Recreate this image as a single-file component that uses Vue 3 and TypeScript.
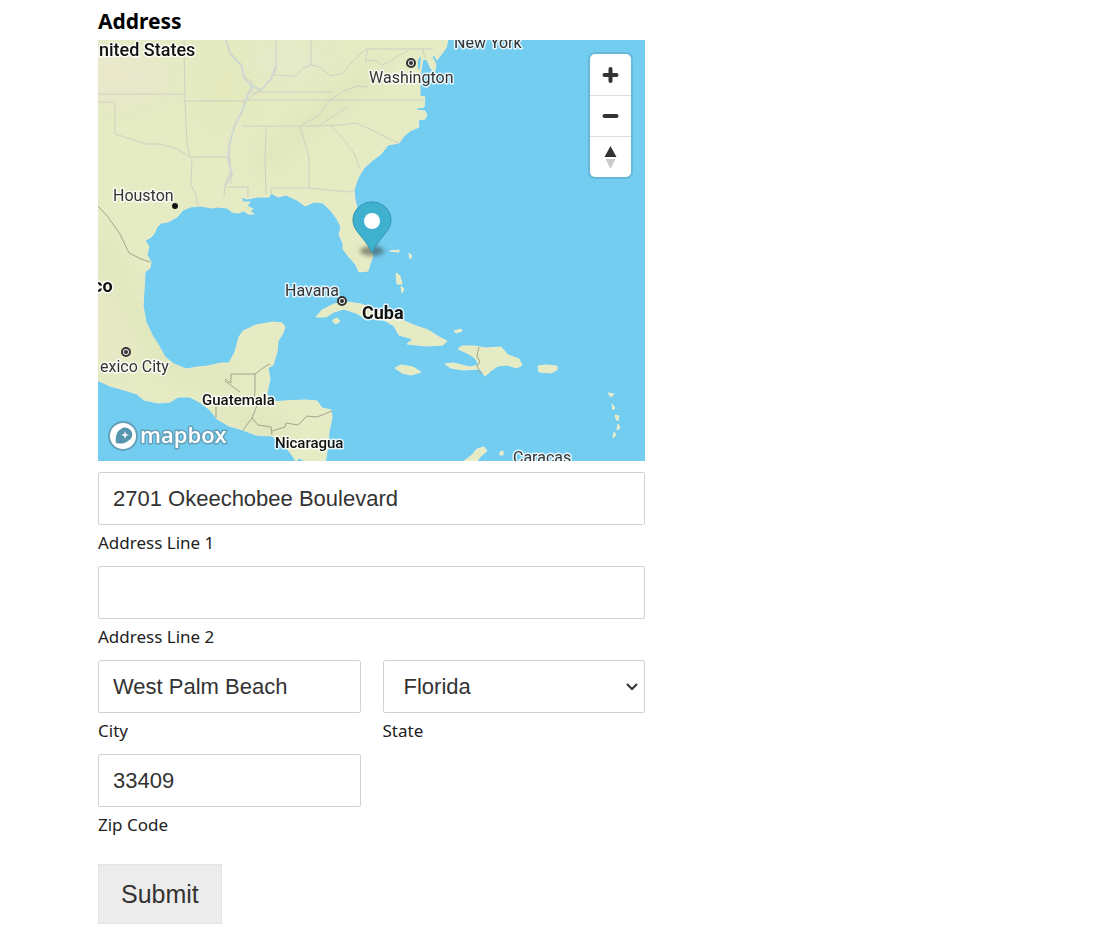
<script setup lang="ts">
import { ref } from 'vue'

const line1 = ref('2701 Okeechobee Boulevard')
const line2 = ref('')
const city = ref('West Palm Beach')
const state = ref('Florida')
const zip = ref('33409')
const states = ['Alabama', 'Florida', 'Georgia', 'Louisiana', 'Texas']

const mainland =
  'M90 30H455L448 40 446 48 440 56 437 60 434 55 432 57 436 64 435 71 431 69 427 60 423 59 421 70 420 85 420 96 425 97 424 107 417 108 416 110 425 111 427 115 425 119 418 120 419 127 410 131 404 136 399 143 388 145 381 154 373 160 364 168 358 178 354 190 355 200 358 212 365 229 371 246 373 256 370 264 368 271 359 272 356 265 349 257 343 249 343 243 339 235 341 227 337 219 331 211 323 203 314 202 305 206 297 200 286 195 278 197 271 193 269 197 258 197 247 199 241 197 243 202 250 202 247 206 253 209 250 211 254 214 248 214 244 211 238 213 232 212 227 208 218 207 211 208 201 206 190 207 183 210 177 217 168 222 161 223 157 227 154 234 150 238 145 240 149 247 147 255 151 262 150 268 145 272 144 290 143 306 146 322 152 335 159 346 165 357 174 364 186 369 198 367 208 366 221 363 229 363 235 352 239 337 243 331 256 325 273 322 282 323 285 327 283 333 278 341 277 352 273 365 268 368 270 379 267 393 270 402 284 401 305 400 317 401 322 408 331 410 332 418 329 431 328 445 324 470H308L305 461 299 458 296 461 289 451 281 443 272 436 256 435 243 430 229 426 217 419 210 410 201 403 190 397 178 397 170 402 158 403 144 400 137 394 121 389 110 386 90 377Z'

const islands: string[] = [
  'M316 317 322 310 334 304 347 302 361 304 371 308 385 313 402 320 416 326 428 330 439 337 447 341 443 345 427 346 407 344 413 339 399 335 394 326 384 320 365 318 356 313 344 309 334 312 326 317Z',
  'M333 320 337 318 340 321 336 324 333 322Z',
  'M395 368 401 365 413 367 421 372 411 375 402 373Z',
  'M445 364 453 363 470 367 479 365 475 358 467 353 458 349 462 346 474 346 486 348 501 347 508 355 519 359 522 365 517 368 507 365 498 366 492 370 485 376 480 369 463 370 451 368Z',
  'M538 366 545 365 557 366 557 370 551 373 539 372Z',
  'M396 273 400 276 402 284 397 284Z',
  'M401 286 404 289 402 293Z',
  'M390 251 399 250 399 252Z',
  'M409 253 412 256 410 259Z',
  'M454 331 461 329 462 331 456 333Z',
  'M464 461 472 455 477 449 484 447 487 451 481 456 477 461Z',
  'M500 452 503 451 503 455 500 455Z',
  'M608 393 614 394 611 397Z',
  'M612 404 615 408 613 410Z',
  'M615 415 619 416 618 421 616 419Z',
  'M618 424 620 428 617 430Z',
  'M614 432 616 435 613 438Z',
]

const stateLines: string[] = [
  'M98 94H184M184 40 185 101 187 144 190 157 230 157 231 184M184 101H245L258 92 269 92 290 92 333 92',
  'M98 102H115V134L131 139 145 144 160 144 175 148 190 157M192 157 191 184 196 196 198 207',
  'M226 40 230 53 242 66 243 76 252 82 252 91 244 101 242 114 234 126 230 144 229 157 231 172 225 184 224 196M276 40V68L271 80 261 90 252 94',
  'M276 68 274 75 296 76 303 68 312 65 321 68 331 76 343 73 352 62 366 49H433',
  'M311 40V65M243 101 249 100 330 100 344 91 357 86 368 87',
  'M242 126H318L348 107M318 126 340 125 356 123 372 130 391 140 399 143',
  'M330 100H424M330 100 318 116 300 126M331 126 345 141 355 155 360 169',
  'M266 126 265 160 266 195M300 126 309 157 309 188 348 192 354 190M309 188H271V194M224 187H248V198',
  'M423 50 425 58M368 49 365 61 375 60 382 65 391 61 400 55 408 51',
]

const countryLines: string[] = [
  'M98 206 108 217 120 234 129 253 141 259 150 262',
  'M225 379 231 383 231 374H255L255 391M255 374 266 366 270 364M225 381 240 392M255 391 254 405M216 405V418M258 403 252 418 243 430M252 418 258 425 271 427 272 435M272 431 285 427 286 423 298 425 307 416 317 417 332 411',
  'M479 347 477 356 480 362 477 366 481 374',
]

const rivers =
  'M226 40 230 53 242 66 244 78 252 86 247 97 243 109 235 125 229 145 228 160 232 175 224 187M252 86 261 90 271 79 276 66'

const relief: string[] = [
  'M98 240C118 275 125 308 150 340S180 375 230 380',
  'M260 165C300 125 340 100 380 65',
  'M220 403C240 420 263 426 282 430',
]

function zoomIn(): void {}
function zoomOut(): void {}
function resetBearing(): void {}
</script>

<template>
  <main class="page">
    <form class="address-form" @submit.prevent>
      <h2 class="title">Address</h2>

      <div class="map">
        <svg class="map-canvas" viewBox="98 40 547 421" role="img" aria-label="Map">
          <defs>
            <clipPath id="land-clip"><path :d="mainland" /></clipPath>
            <filter id="soft" x="-30%" y="-30%" width="160%" height="160%">
              <feGaussianBlur stdDeviation="9" />
            </filter>
            <filter id="pin-shade" x="-50%" y="-80%" width="200%" height="260%">
              <feGaussianBlur stdDeviation="2" />
            </filter>
          </defs>
          <rect x="98" y="40" width="547" height="421" fill="#73cdf0" />
          <path :d="mainland" class="land" />
          <g clip-path="url(#land-clip)" opacity=".6">
            <ellipse cx="112" cy="75" rx="55" ry="30" fill="#ebe6d0" filter="url(#soft)" />
            <ellipse cx="225" cy="85" rx="34" ry="40" fill="#e3e9bb" filter="url(#soft)" />
            <ellipse cx="290" cy="60" rx="40" ry="22" fill="#e6e9cc" filter="url(#soft)" />
            <ellipse cx="112" cy="330" rx="30" ry="45" fill="#e8e7c6" filter="url(#soft)" />
            <path v-for="d in relief" :key="d" :d="d" class="relief" filter="url(#soft)" />
          </g>
          <path v-for="d in islands" :key="d" :d="d" class="land" />
          <path d="M418 60 421 56 420 68 418 70Z" fill="#73cdf0" />
          <path v-for="d in stateLines" :key="d" :d="d" class="state-line" />
          <path :d="rivers" class="river" />
          <path v-for="d in countryLines" :key="d" :d="d" class="country-line" />

          <g class="capital">
            <circle cx="411" cy="63" r="4" /><circle cx="411" cy="63" r="1" />
            <circle cx="342" cy="301" r="4" /><circle cx="342" cy="301" r="1" />
            <circle cx="126" cy="352" r="4" /><circle cx="126" cy="352" r="1" />
          </g>
          <circle cx="175" cy="206" r="3" fill="#111" />

          <g class="place">
            <text x="454" y="48">New York</text>
            <text x="369" y="83">Washington</text>
            <text x="113" y="201">Houston</text>
            <text x="285" y="296">Havana</text>
            <text x="100" y="372">exico City</text>
            <text x="513" y="463">Caracas</text>
          </g>
          <g class="country">
            <text class="large" x="99" y="56">nited States</text>
            <text class="strong" x="93" y="292">co</text>
            <text class="strong" x="362" y="319">Cuba</text>
            <text x="202" y="405">Guatemala</text>
            <text x="275" y="448">Nicaragua</text>
          </g>

          <ellipse cx="372" cy="251" rx="12" ry="5" fill="#333" opacity=".5" filter="url(#pin-shade)" />
          <path
            d="M372 253C369 246 365 241 360 235 356 230 353 226 353 220A19 18 0 0 1 391 220C391 226 388 230 384 235 379 241 375 246 372 253Z"
            fill="#3fb1ce"
            stroke="#3293ad"
          />
          <circle cx="372" cy="221" r="8" fill="#fff" />

          <g>
            <circle cx="123" cy="436" r="14" fill="#fff" stroke="#64a1b9" stroke-width="2" />
            <path
              d="M116 443C115 436 117 431 121 429A7 7 0 1 1 128 441C124 444 120 444 116 443Z"
              fill="#5596ae"
            />
            <path d="M125 431 126 434 129 435 126 436 125 439 124 436 121 435 124 434Z" fill="#f4fbfe" />
            <text class="wordmark" x="140" y="443">mapbox</text>
          </g>
        </svg>

        <div class="map-controls">
          <button type="button" aria-label="Zoom in" @click="zoomIn">
            <svg viewBox="0 0 40 40"><path d="M14 20H26M20 14V26" class="bar" /></svg>
          </button>
          <button type="button" aria-label="Zoom out" @click="zoomOut">
            <svg viewBox="0 0 40 40"><path d="M14 20H26" class="bar" /></svg>
          </button>
          <button type="button" aria-label="Reset bearing to north" @click="resetBearing">
            <svg viewBox="0 0 40 40">
              <path d="M20 9 26 20H14Z" fill="#333" />
              <path d="M15 22H25L20 32Z" fill="#ccc" />
            </svg>
          </button>
        </div>
      </div>

      <div class="fields">
        <div class="field wide">
          <input id="line1" v-model="line1" type="text" />
          <label for="line1">Address Line 1</label>
        </div>
        <div class="field wide">
          <input id="line2" v-model="line2" type="text" />
          <label for="line2">Address Line 2</label>
        </div>
        <div class="field">
          <input id="city" v-model="city" type="text" />
          <label for="city">City</label>
        </div>
        <div class="field">
          <div class="select-box">
            <select id="state" v-model="state">
              <option v-for="s in states" :key="s" :value="s">{{ s }}</option>
            </select>
            <svg class="chevron" viewBox="0 0 14 10" aria-hidden="true">
              <path d="M2 2 7 7 12 2" />
            </svg>
          </div>
          <label for="state">State</label>
        </div>
        <div class="field">
          <input id="zip" v-model="zip" type="text" />
          <label for="zip">Zip Code</label>
        </div>
      </div>

      <button class="submit" type="submit">Submit</button>
    </form>
  </main>
</template>

<style>
body {
  margin: 0;
  background: #fff;
}
</style>

<style scoped>
.page {
  box-sizing: border-box;
  padding: 4px 24px 16px 98px;
  font-family: 'Noto Sans', 'Open Sans', sans-serif;
  color: #222;
}
.address-form {
  max-width: 547px;
}
.title {
  margin: 0;
  padding-bottom: 2px;
  font-size: 21px;
  line-height: 34px;
  font-weight: 700;
  color: #000;
}
.map {
  position: relative;
  overflow: hidden;
}
.map-canvas {
  display: block;
  width: 100%;
  height: auto;
}
.land {
  fill: #e5ebc3;
  stroke: #eeecc9;
  stroke-width: 1;
  stroke-linejoin: round;
}
.relief {
  fill: none;
  stroke: #d9e2b4;
  stroke-width: 14;
}
.state-line,
.country-line,
.river {
  fill: none;
  stroke-linejoin: round;
}
.state-line {
  stroke: #d0cfc3;
}
.river {
  stroke: #cfd9d2;
  stroke-width: 2;
}
.country-line {
  stroke: #a3a58d;
}
.capital circle {
  fill: #eee;
  stroke: #333;
  stroke-width: 2;
}
.map text {
  font-family: Roboto, sans-serif;
  paint-order: stroke;
  stroke: #fff;
  stroke-width: 3px;
  stroke-opacity: 0.8;
  stroke-linejoin: round;
}
.place text {
  font-size: 16px;
  fill: #333;
}
.country text {
  font-size: 15px;
  font-weight: 500;
  fill: #111;
}
.country .large {
  font-size: 18px;
}
.country .strong {
  font-size: 18px;
  font-weight: 700;
}
.map .wordmark {
  font-family: 'Open Sans', sans-serif;
  font-size: 22px;
  font-weight: 600;
  fill: #fff;
  stroke: #64a1b9;
  stroke-opacity: 1;
}
.map-controls {
  position: absolute;
  top: 14px;
  right: 14px;
  width: 41px;
  border-radius: 5px;
  background: #fff;
  box-shadow: 0 0 0 2px rgba(0, 0, 0, 0.1);
}
.map-controls button {
  display: block;
  box-sizing: border-box;
  width: 100%;
  height: 41px;
  padding: 0;
  border: 0;
  background: transparent;
  cursor: pointer;
}
.map-controls button + button {
  border-top: 1px solid #ddd;
}
.map-controls svg {
  display: block;
  width: 100%;
  height: 40px;
}
.bar {
  stroke: #333;
  stroke-width: 4;
  stroke-linecap: round;
}
.fields {
  display: grid;
  grid-template-columns: 1fr 1fr;
  column-gap: 22px;
  padding-top: 11px;
}
.wide {
  grid-column: 1 / -1;
}
.field {
  min-width: 0;
}
.field input,
.field select {
  display: block;
  box-sizing: border-box;
  width: 100%;
  height: 53px;
  margin: 0;
  padding: 0 14px;
  border: 1px solid #d2d2d2;
  border-radius: 2px;
  background: #fff;
  color: #333;
  font-family: 'Liberation Sans', Arial, sans-serif;
  font-size: 22px;
}
.field select {
  appearance: none;
  padding: 0 32px 0 20px;
}
.field label {
  display: block;
  font-size: 17px;
  line-height: 24px;
  padding: 6px 0 11px;
}
.select-box {
  position: relative;
}
.chevron {
  position: absolute;
  right: 6px;
  top: 22px;
  width: 14px;
  height: 10px;
  pointer-events: none;
}
.chevron path {
  fill: none;
  stroke: #333;
  stroke-width: 2;
}
.submit {
  display: block;
  height: 60px;
  margin-top: 16px;
  padding: 0 22px;
  border: 1px solid #e4e4e4;
  background: #ececec;
  color: #333;
  font-family: 'Liberation Sans', Arial, sans-serif;
  font-size: 25px;
}
</style>
